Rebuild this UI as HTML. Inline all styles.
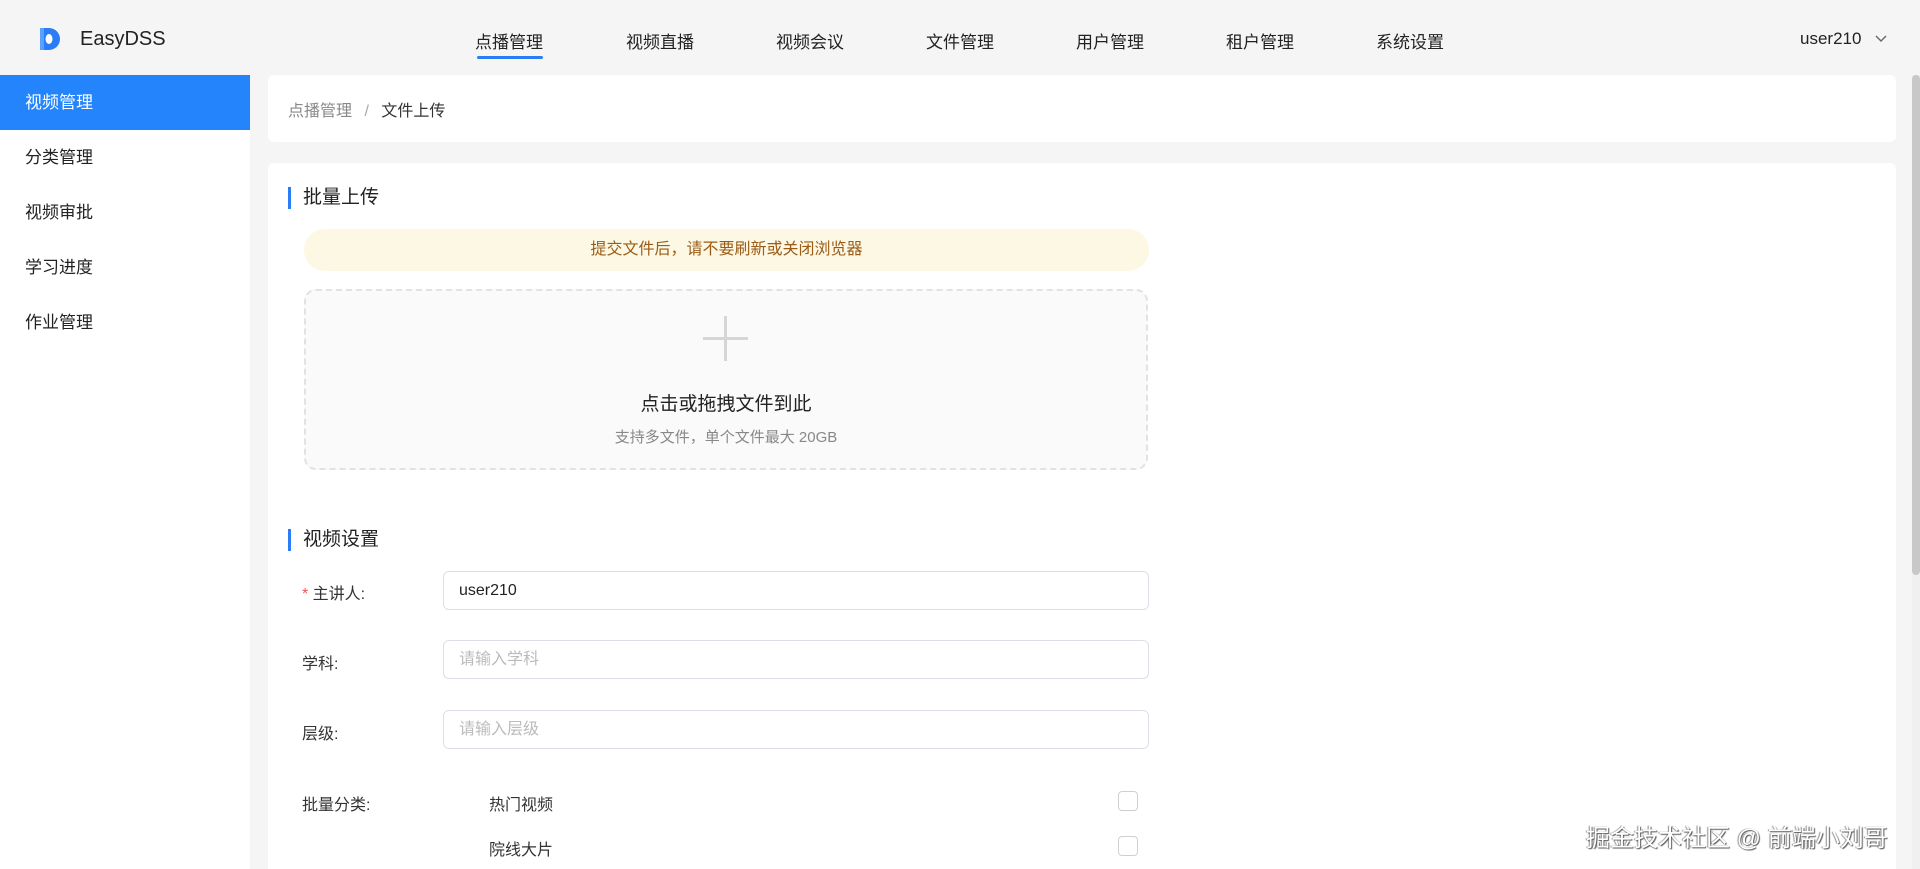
<!DOCTYPE html>
<html><head><meta charset="utf-8"><style>
*{box-sizing:border-box;margin:0;padding:0}
html,body{width:1920px;height:869px;overflow:hidden}
body{background:#f5f5f5;font-family:"Liberation Sans","Noto Sans CJK SC",sans-serif;color:#222;position:relative}
.abs{position:absolute}
.nav{top:28px;font-size:17px;color:#222;transform:translateX(-50%);white-space:nowrap}
.side{left:0;width:250px;height:55px;line-height:55px;padding-left:25px;font-size:17px;color:#222}
.card{background:#fff;border-radius:6px}
.sec{font-size:19px;color:#222;border-left:3px solid #2a7df6;padding-left:12px;line-height:22px}
.lbl{font-size:16px;color:#333}
.inp{left:443px;width:706px;height:39px;border:1px solid #dcdfe6;border-radius:6px;padding-left:15px;line-height:37px;font-size:16px}
.cb{left:1118px;width:20px;height:20px;border:1px solid #d0d0d0;border-radius:4px;background:#fff}
</style></head><body>
<svg class="abs" style="left:37px;top:26px" width="24" height="26" viewBox="0 0 24 26"><path d="M3 2h9a10 10 0 0 1 0 22H3z" fill="#2a7df6"/><path d="M3 2h4v22H3z" fill="#5aa0ff"/><ellipse cx="12" cy="13" rx="3.5" ry="5" fill="#fff"/></svg>
<div class="abs" style="left:80px;top:28px;font-size:20px;color:#222">EasyDSS</div>
<div class="abs nav" style="left:509px">点播管理</div>
<div class="abs" style="left:477px;top:56px;width:66px;height:3px;background:#2a7df6;border-radius:2px"></div>
<div class="abs nav" style="left:660px">视频直播</div>
<div class="abs nav" style="left:810px">视频会议</div>
<div class="abs nav" style="left:960px">文件管理</div>
<div class="abs nav" style="left:1110px">用户管理</div>
<div class="abs nav" style="left:1260px">租户管理</div>
<div class="abs nav" style="left:1410px">系统设置</div>
<div class="abs" style="left:1800px;top:29px;font-size:17px">user210</div>
<svg class="abs" style="left:1874px;top:34px" width="14" height="10" viewBox="0 0 14 10"><path d="M2 2l5 5 5-5" fill="none" stroke="#666" stroke-width="1.4"/></svg>

<div class="abs" style="left:0;top:75px;width:250px;height:794px;background:#fff"></div>
<div class="abs side" style="top:75px;background:#2384fb;color:#fff">视频管理</div>
<div class="abs side" style="top:130px">分类管理</div>
<div class="abs side" style="top:185px">视频审批</div>
<div class="abs side" style="top:240px">学习进度</div>
<div class="abs side" style="top:295px">作业管理</div>

<div class="abs card" style="left:268px;top:75px;width:1628px;height:67px"></div>
<div class="abs" style="left:288px;top:97px;font-size:16px;color:#888">点播管理 <span style="margin:0 8px;color:#aaa">/</span> <span style="color:#333">文件上传</span></div>

<div class="abs card" style="left:268px;top:163px;width:1628px;height:720px"></div>
<div class="abs sec" style="left:288px;top:187px">批量上传</div>
<div class="abs" style="left:304px;top:229px;width:845px;height:42px;border-radius:21px;background:#fdf8e3;color:#9a5b16;font-size:16px;text-align:center;line-height:42px">提交文件后，请不要刷新或关闭浏览器</div>
<div class="abs" style="left:304px;top:289px;width:844px;height:181px;border:2px dashed #e2e2e2;border-radius:12px;background:#fafafa"></div>
<div class="abs" style="left:703px;top:337px;width:45px;height:3px;background:#d6d6d6"></div>
<div class="abs" style="left:724px;top:316px;width:3px;height:45px;background:#d6d6d6"></div>
<div class="abs" style="left:304px;top:389px;width:844px;text-align:center;font-size:19px;color:#222">点击或拖拽文件到此</div>
<div class="abs" style="left:304px;top:426px;width:844px;text-align:center;font-size:15px;color:#888">支持多文件，单个文件最大 20GB</div>

<div class="abs sec" style="left:288px;top:529px">视频设置</div>
<div class="abs lbl" style="left:302px;top:580px"><span style="color:#e55">*</span> 主讲人:</div>
<div class="abs inp" style="top:571px;color:#222">user210</div>
<div class="abs lbl" style="left:302px;top:650px">学科:</div>
<div class="abs inp" style="top:640px;color:#bbb">请输入学科</div>
<div class="abs lbl" style="left:302px;top:720px">层级:</div>
<div class="abs inp" style="top:710px;color:#bbb">请输入层级</div>
<div class="abs lbl" style="left:302px;top:791px">批量分类:</div>
<div class="abs lbl" style="left:489px;top:791px">热门视频</div>
<div class="abs cb" style="top:791px"></div>
<div class="abs lbl" style="left:489px;top:836px">院线大片</div>
<div class="abs cb" style="top:836px"></div>

<div class="abs" style="left:1912px;top:75px;width:8px;height:794px;background:#f0f0f0"></div>
<div class="abs" style="left:1912px;top:75px;width:8px;height:500px;background:#c8c8c8;border-radius:4px"></div>
<div class="abs" style="left:1586px;top:818px;font-size:24px;color:#fff;text-shadow:1px 1px 1px #555,-1px 0 1px #888;white-space:nowrap">掘金技术社区 @ 前端小刘哥</div>
</body></html>
